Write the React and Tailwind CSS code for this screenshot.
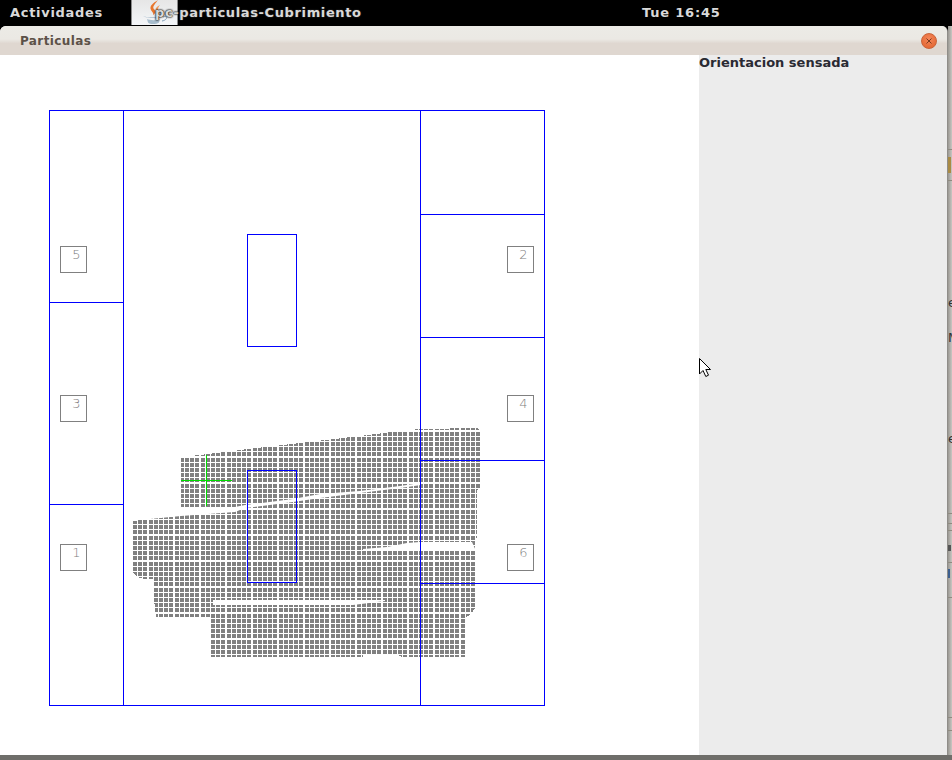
const BLUE = '#0000ff'

const blueLines = [
  // [x1, y1, x2, y2]
  [123.5, 110, 123.5, 706],
  [420.5, 110, 420.5, 706],
  [49, 302.5, 124, 302.5],
  [49, 504.5, 124, 504.5],
  [420, 214.5, 545, 214.5],
  [420, 337.5, 545, 337.5],
  [420, 460.5, 545, 460.5],
  [420, 583.5, 545, 583.5],
]

const sensors = [
  { n: 5, x: 60, y: 246 },
  { n: 2, x: 507, y: 246 },
  { n: 3, x: 60, y: 395 },
  { n: 4, x: 507, y: 395 },
  { n: 1, x: 60, y: 544 },
  { n: 6, x: 507, y: 544 },
]

// cell offsets repeat every 26px, the pitch is 5.2 rounded to whole pixels
const cellOffsets = [0, 5, 10, 16, 21]

const particleShapes = [
  '181,457 200,455 240,450 300,443 360,436 400,431 420,429 478,428 480,431 480,487 477,490 477,538 473,541 420,546 363,551 181,551',
  '133,521 155,518 181,516 420,480 475,500 475,608 473,611 468,616 465,618 465,657 402,657 398,655 363,655 363,657 210,657 210,617 156,617 154,600 153,579 145,579 137,577 133,573',
]

const whiteBands = [
  '181,507 235,507 245,505 293,499 320,494 360,491 400,486 421,483 421,485 400,488 360,493 320,498 293,502 245,508 235,512 181,516 150,519 120,521 120,500 181,500',
  '213,600 353,600 385,600 385,601 353,605 213,605',
  '363,549 387,547 407,543 420,542 472,542 476,551 363,551',
]

function Canvas() {
  return (
    <svg width="699" height="701" viewBox="0 55 699 701" className="block">
      <defs>
        <pattern id="cells" x="133" y="520" width="26" height="26" patternUnits="userSpaceOnUse">
          {cellOffsets.map((cx) =>
            cellOffsets.map((cy) => (
              <rect key={`${cx}-${cy}`} x={cx} y={cy} width="4" height="4" fill="#808080" shapeRendering="crispEdges" />
            ))
          )}
        </pattern>
      </defs>

      {particleShapes.map((points, i) => (
        <polygon key={i} points={points} fill="url(#cells)" shapeRendering="crispEdges" />
      ))}
      {whiteBands.map((points, i) => (
        <polygon key={i} points={points} fill="#ffffff" />
      ))}

      <g stroke="#00dd00" strokeWidth="1">
        <line x1="181" y1="480.5" x2="232" y2="480.5" />
        <line x1="206.5" y1="455" x2="206.5" y2="506" />
      </g>

      <g stroke={BLUE} strokeWidth="1" fill="none">
        <rect x="49.5" y="110.5" width="495" height="595" />
        <rect x="247.5" y="234.5" width="49" height="112" />
        <rect x="247.5" y="470.5" width="49" height="112" />
        {blueLines.map(([x1, y1, x2, y2], i) => (
          <line key={i} x1={x1} y1={y1} x2={x2} y2={y2} />
        ))}
      </g>

      {sensors.map((s) => (
        <g key={s.n}>
          <rect x={s.x + 0.5} y={s.y + 0.5} width="26" height="26" fill="#ffffff" stroke="#808080" />
          <text
            x={s.x + 16.5}
            y={s.y + 13}
            textAnchor="middle"
            fill="#808080"
            fontSize="13"
            fontWeight="200"
            fontFamily="'DejaVu Sans', sans-serif"
          >
            {s.n}
          </text>
        </g>
      ))}
    </svg>
  )
}

function JavaIcon() {
  return (
    <svg width="34" height="25" viewBox="0 0 34 25" className="block">
      <path d="M20 0 C15 3 11 6 13 10 C14 12 16 13 15 15 C19 13 17 10 15.5 8.5 C14.5 6 18 3 20 0Z" fill="#e8762d" />
      <path d="M22 5 C18 7 17 9 18 11 C19 12 19 14 18 15 C21 13 21 11 20 9.5 C20 8 21 6 22 5Z" fill="#f0985a" />
      <path d="M5 16 C10 18 20 18 25 16 C23 18.5 10 19 5 16Z" fill="#7f9fb8" />
      <path d="M9 19 C12 20.5 19 20.5 22 19 L21 22.5 C18 24.5 12 24.5 10 22.5Z" fill="#a8bdcc" />
      <path d="M25 17 C30 15 30 20 24 21" fill="none" stroke="#7f9fb8" strokeWidth="1" />
    </svg>
  )
}

function CloseButton() {
  return (
    <div className="w-4 h-4 rounded-full bg-[radial-gradient(circle_at_50%_35%,#f4875a,#e0602a)] border border-[#c9643a] flex items-center justify-center">
      <svg width="8" height="8" viewBox="0 0 8 8">
        <path d="M1.5 1.5 L6.5 6.5 M6.5 1.5 L1.5 6.5" stroke="#7a3a1e" strokeWidth="1" />
      </svg>
    </div>
  )
}

function TopBar() {
  return (
    <div className="h-[26px] shrink-0 bg-black flex items-start text-[#d9d9d9] font-bold text-[13px] tracking-[0.7px] font-['DejaVu_Sans',sans-serif]">
      <span className="ml-[10px] w-[121px] leading-[25px]">Actividades</span>
      <div className="relative w-[47px] h-[25px] bg-gradient-to-b from-[#e6e6e6] to-[#f4f6f8] border-x border-[#8a8a8a] flex justify-center">
        <JavaIcon />
      </div>
      <span className="-ml-[23px] w-[487px] leading-[25px] tracking-[0.62px] z-10 [text-shadow:0_0_1px_#222,0_0_2px_#222,0_0_2px_#222]">pc-particulas-Cubrimiento</span>
      <span className="leading-[25px] tracking-[0.8px]">Tue 16:45</span>
    </div>
  )
}

function App() {
  return (
    <div className="w-[952px] h-[760px] flex flex-col overflow-hidden bg-[#6f6e6a]">
      <TopBar />
      <div className="flex-1 flex min-h-0 bg-black">
        <div className="w-[948px] h-[729px] flex flex-col rounded-t-[6px] overflow-hidden bg-white border-r border-[#8f8d89]">
          <div className="h-[29px] shrink-0 flex items-center justify-between pl-5 pr-[10px] bg-[linear-gradient(#ecebe6_0%,#ebe9e4_45%,#dfd7d0_60%,#dfd7d0_100%)]">
            <span className="font-bold text-[12px] tracking-[0.4px] text-[#5c5148] font-['DejaVu_Sans',sans-serif]">Particulas</span>
            <CloseButton />
          </div>
          <div className="flex-1 flex min-h-0">
            <div className="relative w-[699px] shrink-0 bg-white">
              <Canvas />
              {/* mouse pointer */}
              <svg width="14" height="20" viewBox="0 0 14 20" className="absolute left-[699px] top-[303px] z-10">
                <path d="M0.5 0.5 V16 L4 12.5 L6.8 18.5 L9.5 17.2 L6.8 11.5 L11.5 11.5 Z" fill="#ffffff" stroke="#000000" strokeWidth="1" />
              </svg>
            </div>
            <div className="flex-1 bg-[#ececec]">
              <h2 className="font-bold text-[13px] leading-[15px] tracking-[0px] text-[#2a2a33] font-['DejaVu_Sans',sans-serif]">Orientacion sensada</h2>
            </div>
          </div>
        </div>
        {/* sliver of the window behind */}
        <div className="relative flex-1 h-[729px] bg-[linear-gradient(90deg,#9a9892,#c9c7c3)] overflow-hidden text-[13px] leading-none text-[#333] font-['DejaVu_Sans',sans-serif]">
          <div className="absolute left-0 right-0 top-[123px] h-px bg-[#8f8b80]" />
          <div className="absolute left-0 top-[131px] w-[3px] h-[16px] bg-[#a98b45]" />
          <div className="absolute left-0 right-0 top-[154px] h-px bg-[#8f8b80]" />
          <span className="absolute left-0 top-[270px]">e</span>
          <span className="absolute left-0 top-[305px]">M</span>
          <span className="absolute left-0 top-[406px]">e</span>
          <div className="absolute left-0 right-0 top-[487px] h-px bg-[#8f8b80]" />
          <div className="absolute left-0 right-0 top-[497px] h-px bg-[#8f8b80]" />
          <div className="absolute left-0 right-0 top-[504px] h-px bg-[#8f8b80]" />
          <div className="absolute left-0 top-[519px] w-[3px] h-[6px] bg-[#555]" />
          <div className="absolute left-0 right-0 top-[536px] h-px bg-[#8f8b80]" />
          <div className="absolute left-0 top-[543px] w-[2px] h-[9px] bg-[#3d5f8f]" />
          <div className="absolute left-0 right-0 top-[571px] h-px bg-[#8f8b80]" />
          <div className="absolute left-0 right-0 top-[691px] h-px bg-[#8f8b80]" />
          <div className="absolute left-0 right-0 top-[704px] h-px bg-[#8f8b80]" />
        </div>
      </div>
      <div className="h-[5px] shrink-0 bg-[#6f6e6a]" />
    </div>
  )
}

export default App
